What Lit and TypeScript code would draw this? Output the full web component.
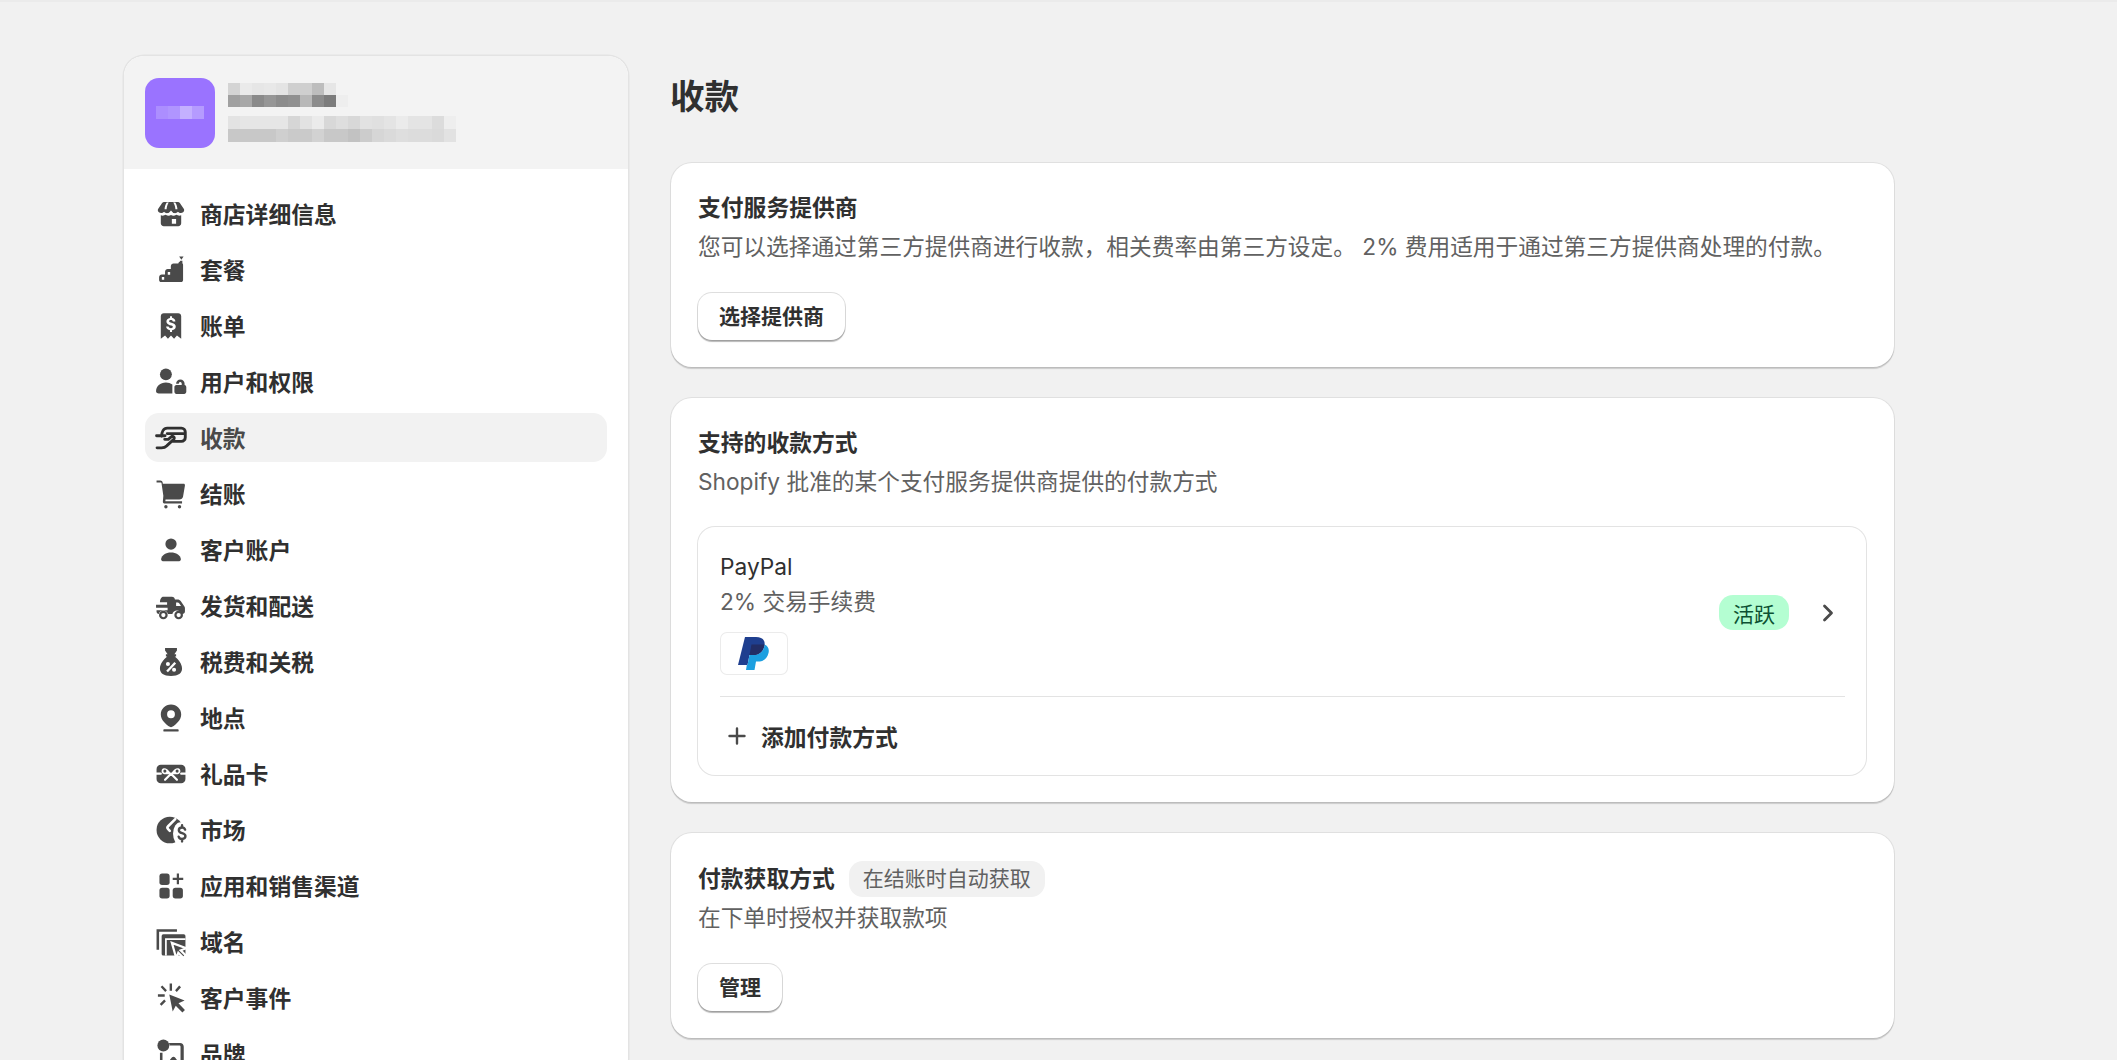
import { LitElement, html, css, svg } from "lit";
import { customElement } from "lit/decorators.js";

const icons: Record<string, unknown> = {
  store: svg`<path d="M6.200 3h7.600c.7 0 1.300.3 1.700.9l2 3c.4.6.3 1.400-.2 1.900-.9.9-2.400.8-3.200-.1-.8 1-2.500 1.100-3.300.1l-.8-.8-.8.8c-.8 1-2.500.9-3.300-.1-.8.900-2.300 1-3.200.1-.5-.5-.6-1.300-.2-1.900l2-3c.4-.6 1-.9 1.700-.9z"/><path d="M7.500 3.200c-.8 1.200-1.200 2.600-1.300 4h1.200c.1-1.400.5-2.800 1.300-4zM12.500 3.200c.8 1.200 1.200 2.600 1.300 4h-1.200c-.1-1.400-.5-2.800-1.300-4z" fill="#fff"/><path fill-rule="evenodd" d="M4 10.800c1 .3 2 .2 2.900-.3 1 .6 2.200.7 3.100.1.900.6 2.100.5 3.100-.1.900.5 1.900.6 2.900.3v4.700c0 1-.8 1.700-1.700 1.700H5.700C4.800 17.200 4 16.500 4 15.500zM10.500 13h2.500v2.700h-2.500z"/>`,
  plan: svg`<path d="M14.800 2h2.600L16.100 4z"/><path d="M15.500 4.500h1.200v1.500c.3.200.4.500.4.900V15.900c0 .7-.5 1.200-1.200 1.200H4.200c-.7 0-1.200-.5-1.200-1.200V14.200c0-.9.700-1.600 1.600-1.600H6.500v-1.600c0-.9.700-1.600 1.600-1.600h1.800V7.800c0-.9.700-1.600 1.600-1.600h2.800c.1-.5.300-.9.800-1.100z"/><path d="M4.600 14.100h1.400v1.700H4.600zM8.100 11.200h1.400v1.600H8.100z" fill="#fff"/>`,
  bill: svg`<path fill-rule="evenodd" d="M5.700 2.500h8.600c.9 0 1.700.8 1.700 1.700v13.300l-2.500-1.900-1.700 1.900-1.800-1.900-1.800 1.900-1.700-1.900L4 17.500V4.200c0-.9.800-1.700 1.700-1.700zM9.400 4.300v1c-1.300.2-2.100 1-2.100 2.100 0 1.200.9 1.800 2 2.100l.9.200c.6.200.9.400.9.800 0 .5-.5.800-1.100.8-.7 0-1.200-.3-1.400-1H7.100c.2 1.300 1 2 2.300 2.200v1h1.200v-1c1.400-.2 2.200-1 2.200-2.200 0-1.300-.9-1.800-2.100-2.100l-.9-.2c-.6-.2-.9-.4-.9-.8 0-.5.400-.7 1-.7.600 0 1 .2 1.200.8h1.500c-.1-1.100-.9-1.900-2-2.100v-1z"/>`,
  user: svg`<circle cx="7" cy="5.500" r="3.500"/><path d="M1.200 15.500c0-3 2.500-5.200 5.800-5.200 1.500 0 2.800.4 3.800 1.200v5.300H2.800c-.9 0-1.600-.5-1.600-1.300z"/><path fill-rule="evenodd" d="M15.500 8.600c1.400 0 2.500 1.100 2.500 2.500v.6c.6.200 1 .7 1 1.400v2.700c0 .7-.6 1.200-1.200 1.200h-4.600c-.7 0-1.200-.5-1.200-1.200v-2.700c0-.7.500-1.300 1.200-1.300h3.100v-.7c0-.6-.3-1.100-.8-1.100s-.9.400-.9 1H13c0-1.400 1.100-2.400 2.500-2.400z"/>`,
  pay: svg`<path fill="none" stroke="currentColor" stroke-width="1.700" stroke-linecap="round" stroke-linejoin="round" d="M1.500 8.700h5M1.800 15.800h2.600c1.200 0 2.400-.5 3.200-1.300l4-3.700c.5-.5.400-1.200-.1-1.500-.4-.3-1-.3-1.400.1l-1.700 1.400H6.300M4.500 9c0-2.500 1-4.800 3.300-4.800h8.300c1.300 0 2.300 1 2.300 2.300v3.200c0 1.300-1 2.300-2.300 2.300h-4.600M7.800 7.400h10.400"/>`,
  cart: svg`<path d="M1.500 2h2.200c.7 0 1.300.5 1.400 1.200l.1.800h12.200c.5 0 .9.400.8 1l-1.100 6.500c-.2 1.100-1.100 1.800-2.200 1.800H6.800c-.1.500-.1.900-.1 1h9.800v1.300H6.300c-.6 0-1.100-.5-1.100-1.100l.3-3.500-1.100-7.400c0-.3-.1-.4-.4-.4H1.500z"/><circle cx="7" cy="17.500" r="1"/><circle cx="15" cy="17.500" r="1"/>`,
  person: svg`<circle cx="10" cy="6.500" r="3.300"/><path d="M10 11.500c-3 0-5.400 1.500-5.800 3.800-.1.700.4 1.300 1 1.300h9.600c.6 0 1.100-.6 1-1.300-.4-2.300-2.800-3.800-5.800-3.800z"/>`,
  truck: svg`<path fill-rule="evenodd" d="M5.500 4.500h5c1 0 1.800.7 1.800 1.700h1.500c.8 0 1.500.4 2 1l2 2.900c.3.400.4.800.4 1.200v1.900c0 .9-.7 1.500-1.500 1.500h-.5a2.800 2.800 0 0 0-5.400 0H8.200a2.800 2.800 0 0 0-5.400 0c-.7-.2-1.300-.6-1.300-1.300v-.9h6.500v-1.500H1.200V9.300h6.500V7.800H3.500c0-1.800.8-3.300 2-3.300zM13 8h1c.3 0 .6.100.8.400l1.100 1.600H13z"/><circle cx="5.500" cy="15.300" r="1.900" fill="none" stroke="currentColor" stroke-width="1.300"/><circle cx="14.500" cy="15.300" r="1.900" fill="none" stroke="currentColor" stroke-width="1.300"/>`,
  tax: svg`<path fill-rule="evenodd" d="M6.500 1.800h7v1.400L12 5.500h1v1.300h-.8c2.300 1.700 4.300 4.600 4.300 7 0 2.700-2.100 4.400-6.500 4.400s-6.500-1.700-6.500-4.400c0-2.400 2-5.300 4.300-7H7V5.500h1L6.500 3.200zM8.200 10a1.200 1.200 0 1 0 0 2.400 1.200 1.200 0 0 0 0-2.400zm3.600 3.400a1.200 1.200 0 1 0 0 2.400 1.200 1.200 0 0 0 0-2.400zM12 10l-4.800 5.100 1 .9 4.800-5.100z"/>`,
  pin: svg`<path fill-rule="evenodd" d="M10 2c-3.400 0-6 2.600-6 5.900 0 3.200 3 5.900 5.300 7.300.4.300 1 .3 1.400 0C13 13.800 16 11.100 16 7.900 16 4.600 13.400 2 10 2zm0 3.500a2.300 2.300 0 1 1 0 4.600 2.300 2.300 0 0 1 0-4.600z"/><rect x="5.500" y="16.600" width="9" height="1.400" rx=".5"/>`,
  gift: svg`<rect x="1.500" y="4.500" width="17" height="11" rx="2.500"/><path fill="none" stroke="#fff" stroke-width="1.300" stroke-linecap="round" d="M1 9.800h3M16 9.800h3M10 9.800l-3.500 3.600M10 9.800l3.500 3.600"/><path fill="#fff" d="M10 9.800C8.500 7.400 7 6.400 5.800 6.600 4.300 6.900 4 9 5.300 9.800c1.100.7 3 .3 4.700 0zM10 9.800c1.500-2.400 3-3.400 4.200-3.200 1.500.3 1.800 2.400.5 3.200-1.100.7-3 .3-4.700 0z"/><circle cx="6.400" cy="8.300" r=".9"/><circle cx="13.600" cy="8.300" r=".9"/>`,
  market: svg`<circle cx="9.300" cy="10" r="7.800"/><ellipse cx="15.600" cy="12.200" rx="4.400" ry="6.800" fill="#fff"/><path fill="none" stroke="#fff" stroke-width="1.500" stroke-linecap="round" d="M12.500 3.600L8.300 7.800c-.5.500-.5 1.200 0 1.700l1 1"/><path fill="none" stroke="currentColor" stroke-width="1.400" stroke-linecap="round" d="M18.300 9.800c-.3-.8-1-1.300-1.800-1.300-1.100 0-1.900.7-1.900 1.600 0 2.300 3.900 1.200 3.900 3.500 0 1-.9 1.700-2 1.700-.9 0-1.700-.5-2-1.400M16.500 7.200v1.200M16.500 15.400v1.300"/>`,
  apps: svg`<rect x="3.200" y="2.700" width="6" height="6.700" rx="1.600"/><rect x="3.200" y="11" width="6" height="6.300" rx="1.600"/><rect x="11" y="11" width="6" height="6.300" rx="1.600"/><path d="M13.400 2.700h1.300v2.500h2.500v1.300h-2.500V9h-1.300V6.500h-2.400V5.200h2.400z"/>`,
  domain: svg`<path d="M1.500 2.500h12v1.500H3v10.500H1.500z"/><rect x="4.500" y="5.500" width="14" height="12.500" rx="1"/><path fill="none" stroke="#fff" stroke-width="1" d="M7 18V8.300h11.500"/><path stroke="#fff" stroke-width="1.300" d="M10.500 10.500l8.500 3.200-3.300 1.200 3 3-1.400 1.400-3-3-1.200 3.300z"/>`,
  events: svg`<path d="M9 8l9 3.500-3.600 1.600 3.800 3.900-1.500 1.500-3.900-3.900L11 18z"/><path d="M9.200 1.500h1.400v4.200H9.200zM2.300 7.800h4v1.400h-4zM3.900 3.600l1-1 2.700 2.800-1 1zM14.800 2.700l1.100 1-2.500 2.700-1-1zM6 10.900l1 1-2.600 2.600-1-1z"/>`,
  brand: svg`<circle cx="5.500" cy="5" r="3.500"/><path fill-rule="evenodd" d="M8.800 3.500h6.500c1.300 0 2.200 1 2.200 2.200v10.600c0 1.200-1 2.200-2.200 2.200H5.700c-1.200 0-2.200-1-2.200-2.200V9.200h1.500v7.100c0 .4.300.7.700.7h.8l4-5c.5-.6 1.400-.6 1.900 0l3.200 4.400V5.700c0-.4-.3-.7-.7-.7H9.200z"/>`,
};

const navItems: [string, string][] = [
  ["store", "商店详细信息"],
  ["plan", "套餐"],
  ["bill", "账单"],
  ["user", "用户和权限"],
  ["pay", "收款"],
  ["cart", "结账"],
  ["person", "客户账户"],
  ["truck", "发货和配送"],
  ["tax", "税费和关税"],
  ["pin", "地点"],
  ["gift", "礼品卡"],
  ["market", "市场"],
  ["apps", "应用和销售渠道"],
  ["domain", "域名"],
  ["events", "客户事件"],
  ["brand", "品牌"],
];

const nameRows = [
  ["#d4d4d4", "#eaeaea", "#e6e6e6", "#e8e8e8", "#e4e4e4", "#cfcfcf", "#cfcfcf", "#bdbdbd", "#e6e6e6", "#f3f3f3"],
  ["#a0a0a0", "#a8a8a8", "#8a8a8a", "#969696", "#8c8c8c", "#909090", "#b8b8b8", "#8c8c8c", "#7c7c7c", "#eeeeee"],
];
const emailRows = [
  ["#e3e3e3", "#e6e6e6", "#e6e6e6", "#e6e6e6", "#e6e6e6", "#d6d6d6", "#e2e2e2", "#ebebeb", "#d8d8d8", "#dedede", "#d8d8d8", "#e2e2e2", "#e0e0e0", "#e4e4e4", "#ebebeb", "#e4e4e4", "#e4e4e4", "#dcdcdc", "#eeeeee"],
  ["#c8c8c8", "#c8c8c8", "#c8c8c8", "#c8c8c8", "#cfcfcf", "#cacaca", "#cacaca", "#d2d2d2", "#c8c8c8", "#c8c8c8", "#c2c2c2", "#cccccc", "#d6d6d6", "#dadada", "#dedede", "#dcdcdc", "#dcdcdc", "#dadada", "#e2e2e2"],
];
const avatarCells = ["#ac8eff", "#b095ff", "#c4b0ff", "#b59bff"];

@customElement("app-root")
export class AppRoot extends LitElement {
  static styles = css`
    :host {
      display: block;
      height: 1060px;
      overflow: hidden;
      background: #f1f1f1;
      color: #303030;
      font-family: Inter, "Noto Sans CJK SC", sans-serif;
    }
    .topline { height: 2px; background: #ebebeb; }
    .page {
      display: flex;
      align-items: flex-start;
      gap: 43px;
      padding: 54px 0 0 124px;
    }
    .side {
      flex: none;
      width: 504px;
      background: #fff;
      border-radius: 20px;
      box-shadow: 0 0 0 1.500px #e3e3e3;
      overflow: hidden;
    }
    .acct {
      display: flex;
      gap: 13px;
      align-items: center;
      height: 113px;
      padding: 0 0 0 21px;
      background: #f3f3f3;
      box-sizing: border-box;
    }
    .avatar {
      flex: none;
      width: 70px;
      height: 70px;
      border-radius: 14px;
      background: #9a73ff;
      display: flex;
      align-items: center;
      justify-content: center;
    }
    .who { display: flex; flex-direction: column; gap: 9px; }
    .mrow { display: flex; }
    .cell { width: 12px; height: 12px; }
    .avatar .cell { height: 13px; }
    .email .cell { height: 13px; }
    nav { padding: 20px 21px 0; display: flex; flex-direction: column; gap: 7px; }
    .item {
      display: flex;
      align-items: center;
      gap: 12px;
      height: 49px;
      padding-left: 9px;
      border-radius: 14px;
      font-size: 22.800px;
      font-weight: 700;
      color: #303030;
    }
    .item.on { background: #f2f2f2; color: #4a4a4a; }
    .item svg { width: 34px; height: 34px; flex: none; fill: currentColor; color: #4a4a4a; }
    .item.on svg { color: #303030; }
    main { flex: none; width: 1223px; }
    h1 {
      margin: 0 0 0 -1px;
      font-size: 34.500px;
      line-height: 48px;
      font-weight: 700;
      padding: 17px 0 0;
      height: 107px;
      box-sizing: border-box;
    }
    .cards { display: flex; flex-direction: column; gap: 31px; }
    .card {
      background: #fff;
      border-radius: 21px;
      padding: 26px 28px 27px 27px;
      box-shadow: 0 2px 1px rgba(0, 0, 0, .16), 0 0 0 1px rgba(0, 0, 0, .07);
    }
    .title {
      display: flex;
      align-items: center;
      gap: 14px;
      font-size: 22.800px;
      font-weight: 700;
      line-height: 38px;
    }
    .sub { font-size: 22.700px; line-height: 39px; color: #616161; }
    .btn {
      display: inline-flex;
      align-items: center;
      justify-content: center;
      height: 47px;
      padding: 0 21px 3px;
      margin-top: 27px;
      border: 0;
      background: #fff;
      font: inherit;
      font-size: 21px;
      font-weight: 700;
      color: #303030;
      border-radius: 14px;
      box-shadow: 0 2px 1px rgba(0, 0, 0, .28), 0 0 0 1px rgba(0, 0, 0, .13);
    }
    .chip {
      font-size: 21px;
      font-weight: 400;
      color: #616161;
      background: #f1f1f1;
      border-radius: 14px;
      line-height: 36px;
      margin: 1.500px 0;
      padding: 0 14px;
    }
    .panel {
      margin-top: 26px;
      border-radius: 17px;
      box-shadow: 0 0 0 1px #e3e3e3;
      padding: 23px 21px 0 22px;
    }
    .method { display: flex; align-items: center; justify-content: space-between; padding-bottom: 21px; border-bottom: 1.500px solid #e3e3e3; }
    .mname { font-size: 22.700px; line-height: 34px; color: #303030; }
    .mfee { font-size: 22.700px; line-height: 36px; color: #616161; }
    .logo {
      width: 68px;
      height: 43px;
      margin-top: 12px;
      border-radius: 7px;
      box-shadow: inset 0 0 0 1px #ebebeb;
      display: flex;
      align-items: center;
      justify-content: center;
    }
    .logo svg { width: 32px; height: 35px; }
    .state { display: flex; align-items: center; gap: 28px; padding-right: 6px; }
    .badge {
      width: 70px;
      height: 35px;
      border-radius: 14px;
      background: #b4fed2;
      color: #0c5132;
      font-size: 21px;
      display: flex;
      align-items: center;
      justify-content: center;
    }
    .state svg { width: 22px; height: 22px; fill: none; stroke: #4a4a4a; stroke-width: 2.800; stroke-linecap: round; stroke-linejoin: round; }
    .add {
      display: flex;
      align-items: center;
      gap: 15px;
      height: 78px;
      padding-left: 8px;
      font-size: 22.800px;
      font-weight: 700;
    }
    .add svg { width: 18px; height: 18px; fill: none; stroke: #4a4a4a; stroke-width: 2.400; stroke-linecap: round; }
  `;

  private mosaic(rows: string[][]) {
    return rows.map(
      (r) => html`<div class="mrow">${r.map((c) => html`<div class="cell" style="background:${c}"></div>`)}</div>`
    );
  }

  render() {
    return html`
      <div class="topline"></div>
      <div class="page">
        <aside class="side">
          <div class="acct">
            <div class="avatar">${this.mosaic([avatarCells])}</div>
            <div class="who">
              <div>${this.mosaic(nameRows)}</div>
              <div class="email">${this.mosaic(emailRows)}</div>
            </div>
          </div>
          <nav>
            ${navItems.map(
              ([ic, label]) => html`
                <div class="item ${label === "收款" ? "on" : ""}">
                  <svg viewBox="0 0 20 20">${icons[ic]}</svg><span>${label}</span>
                </div>
              `
            )}
          </nav>
        </aside>
        <main>
          <h1>收款</h1>
          <div class="cards">
            <section class="card">
              <div class="title">支付服务提供商</div>
              <div class="sub">您可以选择通过第三方提供商进行收款，相关费率由第三方设定。 2% 费用适用于通过第三方提供商处理的付款。</div>
              <button class="btn">选择提供商</button>
            </section>
            <section class="card">
              <div class="title">支持的收款方式</div>
              <div class="sub">Shopify 批准的某个支付服务提供商提供的付款方式</div>
              <div class="panel">
                <div class="method">
                  <div>
                    <div class="mname">PayPal</div>
                    <div class="mfee">2% 交易手续费</div>
                    <div class="logo">
                      <svg viewBox="0 0 32 35">
                        <path fill="#1f3f8f" d="M7 1h11c6 0 9.500 3 8.500 8.500-1 6-5 9.500-11 9.500h-4L9.500 29H0z"/>
                        <path fill="#1c9fe0" d="M26.500 8.500C30 10 31.500 13 30.500 17c-1.200 5.500-5 8.500-10.500 8.500h-2L16.500 34H8l.8-5h.7l2-10h4c6 0 10-3.500 11-9.500z"/>
                        <path fill="#222d65" d="M11.500 19l2-10.500h13c-1 6-5 10.500-11 10.500z"/>
                      </svg>
                    </div>
                  </div>
                  <div class="state">
                    <div class="badge">活跃</div>
                    <svg viewBox="0 0 22 22"><path d="M7.500 4l7 7-7 7"/></svg>
                  </div>
                </div>
                <div class="add">
                  <svg viewBox="0 0 18 18"><path d="M9 1.500v15M1.500 9h15"/></svg><span>添加付款方式</span>
                </div>
              </div>
            </section>
            <section class="card">
              <div class="title">付款获取方式<span class="chip">在结账时自动获取</span></div>
              <div class="sub">在下单时授权并获取款项</div>
              <button class="btn">管理</button>
            </section>
          </div>
        </main>
      </div>
    `;
  }
}
